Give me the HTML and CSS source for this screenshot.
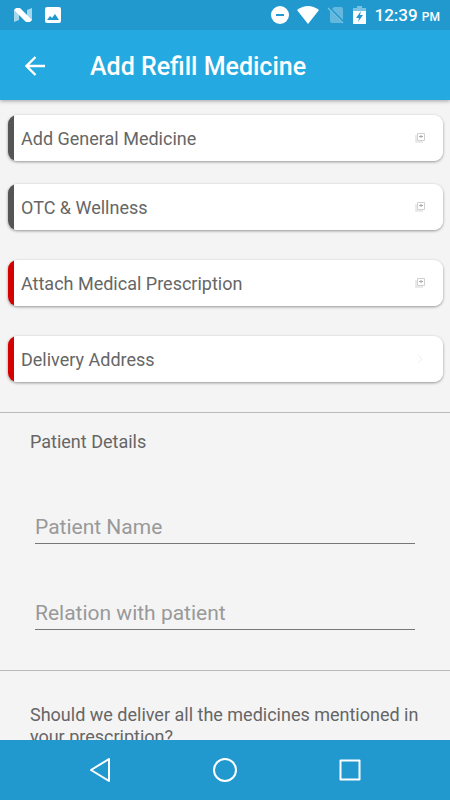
FILE: index.html
```html
<!DOCTYPE html>
<html lang="en">
<head>
  <meta charset="UTF-8">
  <meta name="viewport" content="width=device-width, initial-scale=1.0">
  <title>Add Refill Medicine</title>
  <link rel="stylesheet" href="styles.css">
</head>
<body>

  <div class="status-bar">
    <div class="status-left">
      <svg width="20" height="16" viewBox="0 0 20 16">
        <path d="M1 3L6 1V13L1 15Z M14 3L19 1V13L14 15Z" fill="#fff" opacity=".6"/>
        <path d="M1 3L3 1H7L19 13L17 15H13Z" fill="#fff"/>
      </svg>
      <svg width="18" height="18" viewBox="0 0 18 18">
        <path d="M3 1H15Q17 1 17 3V15Q17 17 15 17H3Q1 17 1 15V3Q1 1 3 1ZM3 14H15L11 8L8 12L6 10Z" fill="#fff" fill-rule="evenodd"/>
      </svg>
    </div>
    <div class="status-right">
      <svg width="18" height="18" viewBox="0 0 18 18">
        <circle cx="9" cy="9" r="9" fill="#fff"/>
        <path d="M5 9H13" stroke="#2199cf" stroke-width="2"/>
      </svg>
      <svg width="22" height="18" viewBox="0 0 22 18">
        <path d="M0 4Q11 -4 22 4L11 18Z" fill="#fff"/>
      </svg>
      <svg width="18" height="18" viewBox="0 0 18 18">
        <path d="M7 1H14Q16 1 16 3V14L5 3ZM3 5L15 17H5Q3 17 3 15Z" fill="#fff" opacity=".3"/>
        <path d="M1 2L16 17" stroke="#fff" stroke-width="1.3" opacity=".4"/>
      </svg>
      <svg width="13" height="18" viewBox="0 0 13 18">
        <path d="M0 5V2H4V0H9V2H13V5Z" fill="#fff" opacity=".4"/>
        <path d="M0 5H13V18H0ZM8 5L3 12H6L5 16L10 9H7Z" fill="#fff" fill-rule="evenodd"/>
      </svg>
      <span class="clock">12:39 <small>PM</small></span>
    </div>
  </div>

  <header class="app-bar">
    <button class="back" type="button" aria-label="Back">
      <svg width="20" height="20" viewBox="0 0 20 20" fill="none" stroke="#fff" stroke-width="2.4">
        <path d="M20 10H2M10.500 1L1.500 10L10.500 19"/>
      </svg>
    </button>
    <h1>Add Refill Medicine</h1>
  </header>

  <main>
    <div class="card-list">
      <button class="card" type="button">
        <span>Add General Medicine</span>
        <svg width="10" height="10" viewBox="0 0 10 10" fill="none">
          <path d="M1 2V9H8" stroke="#e4e4e4" stroke-width="1.500"/>
          <path d="M2.500 .5H9.500V7.500H2.500Z" stroke="#d0d0d0"/>
          <path d="M4 3.500H8M6 2V5" stroke="#aaa"/>
        </svg>
      </button>
      <button class="card" type="button">
        <span>OTC &amp; Wellness</span>
        <svg width="10" height="10" viewBox="0 0 10 10" fill="none">
          <path d="M1 2V9H8" stroke="#e4e4e4" stroke-width="1.500"/>
          <path d="M2.500 .5H9.500V7.500H2.500Z" stroke="#d0d0d0"/>
          <path d="M4 3.500H8M6 2V5" stroke="#aaa"/>
        </svg>
      </button>
      <button class="card required" type="button">
        <span>Attach Medical Prescription</span>
        <svg width="10" height="10" viewBox="0 0 10 10" fill="none">
          <path d="M1 2V9H8" stroke="#e4e4e4" stroke-width="1.500"/>
          <path d="M2.500 .5H9.500V7.500H2.500Z" stroke="#d0d0d0"/>
          <path d="M4 3.500H8M6 2V5" stroke="#aaa"/>
        </svg>
      </button>
      <button class="card required" type="button">
        <span>Delivery Address</span>
        <svg width="10" height="10" viewBox="0 0 10 10" fill="none">
          <path d="M3 1L7 5L3 9" stroke="#eee"/>
        </svg>
      </button>
    </div>

    <section class="patient">
      <h2>Patient Details</h2>
      <input type="text" id="patientName" placeholder="Patient Name" aria-label="Patient Name">
      <input type="text" id="relation" placeholder="Relation with patient" aria-label="Relation with patient">
    </section>

    <section class="question">
      <p>Should we deliver all the medicines mentioned in your prescription?</p>
    </section>
  </main>

  <nav class="nav-bar">
    <button type="button" aria-label="Back">
      <svg width="24" height="24" viewBox="0 0 24 24" fill="none" stroke="#fff" stroke-width="2" stroke-linejoin="round">
        <path d="M21 1V23L3 12Z"/>
      </svg>
    </button>
    <button type="button" aria-label="Home">
      <svg width="24" height="24" viewBox="0 0 24 24" fill="none" stroke="#fff" stroke-width="2">
        <circle cx="12" cy="12" r="11"/>
      </svg>
    </button>
    <button type="button" aria-label="Recent apps">
      <svg width="24" height="24" viewBox="0 0 24 24" fill="none" stroke="#fff" stroke-width="2" stroke-linejoin="round">
        <path d="M2.500 2.500H21.500V21.500H2.500Z"/>
      </svg>
    </button>
  </nav>

</body>
</html>
```
FILE: styles.css
```css
* {
  box-sizing: border-box;
}
body {
  margin: 0;
  height: 100vh;
  display: flex;
  flex-direction: column;
  background-color: #f4f4f4;
  color: #666;
  font-family: Roboto, sans-serif;
  font-size: 18px;
}
button {
  padding: 0;
  border: none;
  background: none;
  font: inherit;
  color: inherit;
}
svg {
  display: block;
  flex: none;
}
.status-bar {
  flex: none;
  height: 30px;
  padding: 0 10px 0 13px;
  display: flex;
  align-items: center;
  justify-content: space-between;
  background-color: #2199cf;
  color: #fff;
  z-index: 2;
}
.status-left,
.status-right {
  display: flex;
  align-items: center;
}
.status-left {
  gap: 11px;
}
.status-right {
  gap: 8px;
}
.clock {
  font-size: 17px;
  font-weight: 500;
}
.clock small {
  font-size: 12px;
}
.app-bar {
  flex: none;
  height: 70px;
  display: flex;
  align-items: center;
  padding: 2px 25px 0;
  background-color: #25a9e1;
  color: #fff;
  box-shadow: 0 1px 4px rgba(0,0,0,0.35);
  z-index: 1;
}
.back {
  width: 65px;
}
h1 {
  margin: 0;
  font-size: 25px;
  font-weight: 500;
}
main {
  flex: 1;
  min-height: 0;
  overflow: hidden;
}
.card-list {
  display: flex;
  flex-direction: column;
  gap: 30px;
  padding: 15px 7px 30px 8px;
}
.card {
  height: 46px;
  padding: 0 18px 0 13px;
  display: flex;
  align-items: center;
  justify-content: space-between;
  border-radius: 9px;
  background: linear-gradient(to right, #555 6px, #fff 6px);
  box-shadow: 0 1px 3px rgba(0,0,0,0.4);
  text-align: left;
}
.card:first-child {
  margin-bottom: -7px;
}
.card.required {
  background: linear-gradient(to right, #d50000 6px, #fff 6px);
}
.patient {
  padding: 18px 35px 40px;
  border-top: 1px solid #bbb;
  border-bottom: 1px solid #bbb;
}
h2 {
  margin: 0 -5px 57px;
  font-size: 18px;
  font-weight: 400;
  line-height: 22px;
}
input {
  display: block;
  width: 100%;
  height: 34px;
  padding: 0;
  border: none;
  border-bottom: 1px solid #777;
  border-radius: 0;
  background: none;
  color: #444;
  font: inherit;
  font-size: 21px;
}
input + input {
  margin-top: 52px;
}
input::placeholder {
  color: #999;
}
.question {
  padding: 33px 30px;
}
.question p {
  margin: 0;
  line-height: 22px;
}
.nav-bar {
  flex: none;
  height: 60px;
  display: flex;
  align-items: center;
  justify-content: center;
  background-color: #2199cf;
}
.nav-bar button {
  width: 125px;
  display: flex;
  justify-content: center;
}
```
